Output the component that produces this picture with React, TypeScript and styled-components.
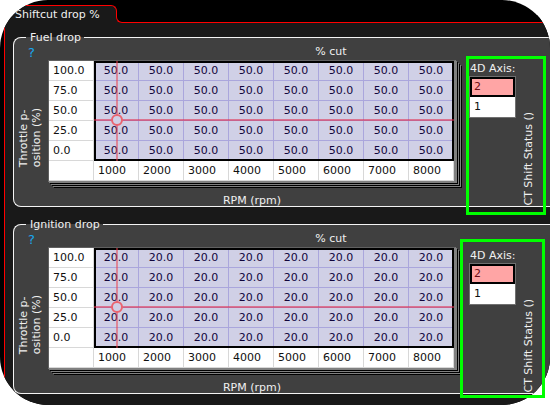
import React, { useState } from "react";
import styled, { createGlobalStyle } from "styled-components";

const GlobalStyle = createGlobalStyle`
  *, *::before, *::after { box-sizing: border-box; }
  body {
    margin: 0;
    background: #fff;
    overflow: hidden;
    color: #f0f0f0;
    font: 11px/14px Verdana, "DejaVu Sans", sans-serif;
  }
  button { font: inherit; cursor: pointer; }
`;

const Page = styled.div`
  position: relative;
`;

const Window = styled.main`
  display: flex;
  flex-direction: column;
  min-height: 100vh;
  padding: 5px 0 0 4px;
  background: #000;
  border-radius: 48px;
  overflow: hidden;
`;

const TabBar = styled.div`
  display: flex;
  align-items: flex-end;
`;

const Tab = styled.button`
  flex: none;
  width: 113px;
  height: 18px;
  padding: 0 0 0 10px;
  border: solid #f00;
  border-width: 1px 1px 0 1px;
  border-radius: 6px 6px 0 0;
  background: #191919;
  color: #f0f0f0;
  text-align: left;
  white-space: nowrap;
`;

const TabTail = styled.div`
  position: relative;
  flex: 1;
  height: 8px;
  margin-left: -1px;
  background: #191919;
`;

const TabLine = styled.div`
  height: 8px;
  border: solid #f00;
  border-width: 0 0 1px 1px;
  border-bottom-left-radius: 6px;
  background: #000;
`;

const Pane = styled.section`
  flex: 1;
  display: flex;
  flex-direction: column;
  gap: 10px;
  padding: 7px 0 11px 8px;
  border-left: 1px solid #f00;
  background: #191919;
`;

const Group = styled.fieldset`
  min-width: 0;
  margin: 0;
  padding: 0;
  border: 1px solid #f4f4f4;
  border-right: 0;
  border-radius: 8px 0 0 8px;
  background: #404040;
`;

const Legend = styled.legend`
  margin-left: 12px;
  padding: 2px 3px 0 4px;
  line-height: 12px;
`;

const GroupBody = styled.div`
  display: grid;
  grid-template-columns: 34px 408px 1fr;
  grid-template-rows: 16px 122px 24px;
`;

const HelpButton = styled.button`
  padding: 0 0 0 14px;
  border: 0;
  background: none;
  color: #18a8ee;
  font-size: 13px;
  line-height: 18px;
  text-align: left;
`;

const ValueCaption = styled.div`
  padding: 1px 0 0 158px;
  text-align: center;
`;

const RpmCaption = styled.div`
  grid-column: 2;
  grid-row: 3;
  align-self: end;
  text-align: center;
  line-height: 11px;
`;

const YCaption = styled.div`
  grid-column: 1;
  grid-row: 2;
  justify-self: start;
  align-self: end;
  margin: 0 0 15px 3px;
  writing-mode: vertical-rl;
  transform: rotate(180deg);
  line-height: 13px;
  white-space: pre;
`;

const Stack = styled.div`
  grid-column: 2;
  grid-row: 2;
  position: relative;
  border: solid #606060;
  border-width: 1px 2px 1px 1px;
  border-right-color: #808080;
  border-bottom-color: #808080;
  box-shadow:
    1px 1px #808080, 2px 2px #000,
    3px 3px #808080, 4px 4px #000,
    5px 5px #808080, 6px 6px #000;
`;

const Table = styled.table`
  width: 100%;
  table-layout: fixed;
  border-collapse: separate;
  border-spacing: 0;
  background: #fff;
  color: #101010;
`;

const AxisCell = styled.th`
  height: 20px;
  padding: 0 0 0 4px;
  border: solid #d8d8d8;
  border-width: 0 1px 1px 0;
  font-weight: normal;
  line-height: 19px;
  text-align: left;
`;

const Cell = styled.td`
  height: 20px;
  padding: 0;
  border: solid #aaa6dc;
  border-width: 0 1px 1px 0;
  background: #d0d0e6;
  color: #12063c;
  line-height: 19px;
  text-align: center;
`;

const Plot = styled.div`
  position: absolute;
  inset: 0 0 20px 45px;
  border: 2px solid #000;
  pointer-events: none;
`;

const VerticalHair = styled.div<{ $at: number }>`
  position: absolute;
  top: -2px;
  bottom: -2px;
  left: ${(p) => p.$at}px;
  width: 2px;
  margin-left: -1px;
  background: rgba(236, 60, 72, 0.5);
`;

const HorizontalHair = styled.div<{ $at: number }>`
  position: absolute;
  left: -2px;
  right: -2px;
  top: ${(p) => p.$at}px;
  height: 2px;
  margin-top: -1px;
  background: rgba(226, 40, 72, 0.55);
`;

const Marker = styled.div<{ $x: number; $y: number }>`
  position: absolute;
  left: ${(p) => p.$x}px;
  top: ${(p) => p.$y}px;
  width: 12px;
  height: 12px;
  margin: -6px 0 0 -6px;
  border: 2px solid #ea6570;
  border-radius: 50%;
  background: #d0d0e6;
`;

const AxisPanel = styled.div`
  grid-column: 3;
  grid-row: 2 / 4;
  display: flex;
  min-height: 0;
  padding: 2px 0 0 13px;
  overflow: hidden;
`;

const AxisPicker = styled.div`
  flex: none;
  width: 53px;
  white-space: nowrap;
`;

const AxisTitle = styled.div`
  padding-left: 1px;
`;

const AxisList = styled.div`
  display: flex;
  flex-direction: column;
  width: 47px;
  border: 1px solid #707070;
`;

const AxisOption = styled.button<{ $active: boolean }>`
  height: 20px;
  padding: 0 0 0 ${(p) => (p.$active ? 2 : 4)}px;
  border: ${(p) => (p.$active ? "2px solid #000" : "0")};
  background: ${(p) => (p.$active ? "#ffa5a5" : "#fff")};
  color: ${(p) => (p.$active ? "#6c0c14" : "#101010")};
  line-height: 16px;
  text-align: left;
`;

const StatusCaption = styled.div`
  flex: none;
  align-self: flex-end;
  writing-mode: vertical-rl;
  transform: rotate(180deg);
  line-height: 13px;
  white-space: nowrap;
`;

const Highlight = styled.div<{ $top: number; $right: number; $width: number }>`
  position: absolute;
  top: ${(p) => p.$top}px;
  right: ${(p) => p.$right}px;
  width: ${(p) => p.$width}px;
  height: 159px;
  border: 3px solid #00ff00;
  pointer-events: none;
`;

const throttle = ["100.0", "75.0", "50.0", "25.0", "0.0"];
const rpm = [1000, 2000, 3000, 4000, 5000, 6000, 7000, 8000];

function DropTable({ title, value }: { title: string; value: string }) {
  const [axis, setAxis] = useState("2");
  return (
    <Group>
      <Legend>{title}</Legend>
      <GroupBody>
        <HelpButton type="button" aria-label={`Help for ${title}`}>?</HelpButton>
        <ValueCaption>% cut</ValueCaption>
        <YCaption>{"Throttle p-\nosition (%)"}</YCaption>
        <Stack>
          <Table aria-label={title}>
            <tbody>
              {throttle.map((t) => (
                <tr key={t}>
                  <AxisCell scope="row">{t}</AxisCell>
                  {rpm.map((r) => (
                    <Cell key={r}>{value}</Cell>
                  ))}
                </tr>
              ))}
              <tr>
                <AxisCell as="td" />
                {rpm.map((r) => (
                  <AxisCell key={r} scope="col">{r}</AxisCell>
                ))}
              </tr>
            </tbody>
          </Table>
          <Plot>
            <VerticalHair $at={21} />
            <HorizontalHair $at={57} />
            <Marker $x={21} $y={57} />
          </Plot>
        </Stack>
        <RpmCaption>RPM (rpm)</RpmCaption>
        <AxisPanel>
          <AxisPicker>
            <AxisTitle>4D Axis:</AxisTitle>
            <AxisList role="group" aria-label="4D Axis">
              {["2", "1"].map((n) => (
                <AxisOption
                  key={n}
                  type="button"
                  $active={axis === n}
                  aria-pressed={axis === n}
                  onClick={() => setAxis(n)}
                >
                  {n}
                </AxisOption>
              ))}
            </AxisList>
          </AxisPicker>
          <StatusCaption>CT Shift Status ()</StatusCaption>
        </AxisPanel>
      </GroupBody>
    </Group>
  );
}

export default function App() {
  return (
    <Page>
      <GlobalStyle />
      <Window>
        <TabBar role="tablist">
          <Tab type="button" role="tab" aria-selected="true">Shiftcut drop %</Tab>
          <TabTail>
            <TabLine />
          </TabTail>
        </TabBar>
        <Pane>
          <DropTable title="Fuel drop" value="50.0" />
          <DropTable title="Ignition drop" value="20.0" />
        </Pane>
      </Window>
      <Highlight $top={56} $right={4} $width={80} />
      <Highlight $top={239} $right={5} $width={85} />
    </Page>
  );
}
